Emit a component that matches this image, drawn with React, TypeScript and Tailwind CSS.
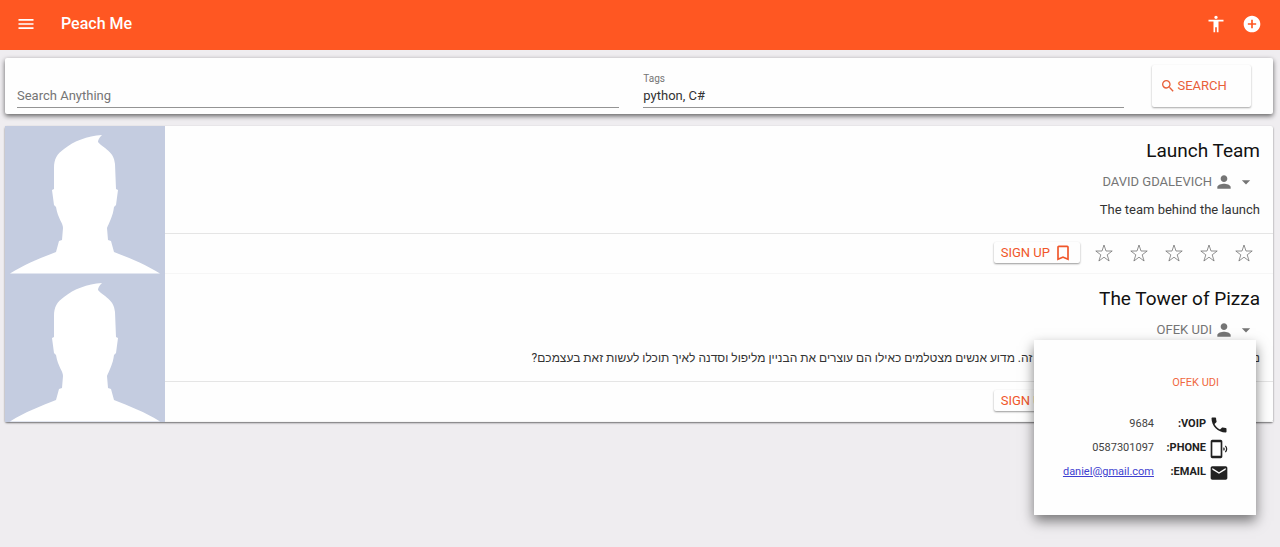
import { useState } from "react";
import {
  MdAccessibility,
  MdAddCircle,
  MdArrowDropDown,
  MdBookmarkBorder,
  MdEmail,
  MdMenu,
  MdPerson,
  MdPhone,
  MdPhonelinkRing,
  MdSearch,
} from "react-icons/md";

type Contact = { voip: string; phone: string; email: string };

type Project = {
  id: number;
  title: string;
  author: string;
  description: string;
  lang: string;
  contact: Contact;
};

const contact: Contact = { voip: "9684", phone: "0587301097", email: "daniel@gmail.com" };

const projects: Project[] = [
  {
    id: 1,
    title: "Launch Team",
    author: "David Gdalevich",
    description: "The team behind the launch",
    lang: "en",
    contact,
  },
  {
    id: 2,
    title: "The Tower of Pizza",
    author: "Ofek Udi",
    description:
      "נדבר על המגדל הנטוי ועל כל מה שמסתתר בו זה. מדוע אנשים מצטלמים כאילו הם עוצרים את הבניין מליפול וסדנה לאיך תוכלו לעשות זאת בעצמכם?",
    lang: "he",
    contact,
  },
];

function Avatar() {
  return (
    <svg viewBox="0 0 160 148" className="block h-[148px] w-40 shrink-0 bg-[#c4cce0]" aria-hidden="true">
      <path
        fill="#fff"
        d="M5 147.500 C20 138 36 132 51 126 L54 115 L57 114 L58 102 C58 97 53 93 51 81 L49 79 L47 64 L49 63 V42 C49 33 52 28 59 23 C69 15 82 10 97 9 C94 12 93 14 93 16 C99 23 109 25 110 38 L111 63 L113 64 L111 79 L109 81 C108 90 104 97 102 102 L103 114 L106 115 L109 126 C124 132 140 138 155 147.500 Z"
      />
    </svg>
  );
}

function Star() {
  return (
    <svg viewBox="0 0 18 18" className="size-[18px]" fill="none" stroke="#757575" strokeWidth="0.8">
      <path d="M9 1 L11 7 H17.200 L12.200 10.800 L14.100 17 L9 13.200 L3.900 17 L5.800 10.800 L0.800 7 H7 Z" />
    </svg>
  );
}

// The label floats above the line once the field has text
function Field({ id, label, initial = "" }: { id: string; label: string; initial?: string }) {
  const [value, setValue] = useState(initial);

  return (
    <div className="relative flex flex-col justify-end px-3 pb-1.5">
      <label
        htmlFor={id}
        className={
          value
            ? "text-[10px] leading-[10px] text-[#757575]"
            : "absolute bottom-1.5 text-[13px] leading-6 text-[#757575]"
        }
      >
        {label}
      </label>
      <input
        id={id}
        value={value}
        onChange={(e) => setValue(e.target.value)}
        className="h-6 w-full border-b border-[#949494] text-[13px] text-[#333] outline-none"
      />
    </div>
  );
}

function ContactCard({ project }: { project: Project }) {
  const rows = [
    { label: "VOIP", icon: MdPhone, value: project.contact.voip },
    { label: "PHONE", icon: MdPhonelinkRing, value: project.contact.phone },
    { label: "EMAIL", icon: MdEmail, value: project.contact.email, href: `mailto:${project.contact.email}` },
  ];

  return (
    <div
      dir="rtl"
      className="absolute right-0 top-full z-10 w-[222px] bg-[#fefefe] px-[27px] pb-[31px] pt-[35px] text-[11px] text-[#424242] shadow-[0_6px_12px_rgba(0,0,0,0.5)]"
    >
      <p className="mb-[21px] px-2.5 leading-4 text-[#f0693f]">{project.author.toUpperCase()}</p>
      {rows.map(({ label, icon: Icon, value, href }) => (
        <div key={label} className="flex h-6 items-center">
          <Icon className="ml-[3px] mt-0.5 size-5 shrink-0 text-[#212121]" />
          <span className="w-[52px] shrink-0 font-bold text-[#212121]">{label}:</span>
          {href ? (
            <a href={href} className="text-[#3f3fd0] underline">
              {value}
            </a>
          ) : (
            <span>{value}</span>
          )}
        </div>
      ))}
    </div>
  );
}

function ProjectRow({
  project,
  open,
  onToggle,
}: {
  project: Project;
  open: boolean;
  onToggle: () => void;
}) {
  return (
    <article className="flex">
      <Avatar />
      <div className="flex min-w-0 flex-1 flex-col">
        <div className="flex flex-col items-end px-[13px] py-[11px]">
          <h2 className="text-[19px] leading-7 text-[#111]">{project.title}</h2>
          <div className="relative mr-1 mt-[7px]">
            <button
              onClick={onToggle}
              aria-expanded={open}
              className="flex h-5 items-center text-[13px] uppercase text-[#757575]"
            >
              {project.author}
              <MdPerson className="ml-0.5 size-5" />
              <MdArrowDropDown className="ml-0.5 size-5" />
            </button>
            {open && <ContactCard project={project} />}
          </div>
          <p
            dir="auto"
            lang={project.lang}
            className="mt-1.5 text-[13px] leading-6 text-[#333] [&:lang(he)]:text-[12px]"
          >
            {project.description}
          </p>
        </div>
        <div className="flex flex-1 items-center justify-end border-y border-t-[#e5e5e5] border-b-[#f6f6f6] pb-0.5 pr-3">
          <button className="mr-1.5 flex h-[21px] items-center rounded-xs px-[7px] text-[13px] text-[#f0562a] shadow-[0_1px_2px_rgba(0,0,0,0.4)]">
            SIGN UP
            <MdBookmarkBorder className="ml-[3px] size-5" />
          </button>
          {[1, 2, 3, 4, 5].map((n) => (
            <button key={n} aria-label={`Rate ${n}`} className="flex w-[35px] justify-center">
              <Star />
            </button>
          ))}
        </div>
      </div>
    </article>
  );
}

export default function App() {
  const [openId, setOpenId] = useState<number | null>(2);

  return (
    <div className="min-h-screen bg-[#efedf0] font-[Roboto,'Liberation_Sans',sans-serif]">
      <header className="flex h-[50px] items-center bg-[#ff5722] px-4 pb-0.5 text-white">
        <button aria-label="Menu">
          <MdMenu className="size-5" />
        </button>
        <h1 className="ml-[25px] text-base font-medium">Peach Me</h1>
        <div className="ml-auto mr-0.5 flex gap-4">
          <button aria-label="Accessibility">
            <MdAccessibility className="size-5" />
          </button>
          <button aria-label="Add project">
            <MdAddCircle className="size-5" />
          </button>
        </div>
      </header>

      <main className="pl-[5px] pr-[7px] pt-2">
        <form
          onSubmit={(e) => e.preventDefault()}
          className="mb-3 grid h-14 grid-cols-[41fr_33fr_9fr] rounded-xs bg-[#fefefe] shadow-[0_2px_5px_rgba(0,0,0,0.6)]"
        >
          <Field id="search" label="Search Anything" />
          <Field id="tags" label="Tags" initial="python, C#" />
          <div className="flex items-center pl-4 pr-[22px]">
            <button className="flex h-[42px] w-full items-center gap-0.5 rounded-xs px-2 text-[13px] text-[#e8603a] shadow-[0_1px_2px_rgba(0,0,0,0.35)]">
              <MdSearch className="size-4" />
              SEARCH
            </button>
          </div>
        </form>

        <section className="rounded-xs bg-[#fefefe] shadow-[0_1px_2px_rgba(0,0,0,0.55)]">
          {projects.map((p) => (
            <ProjectRow
              key={p.id}
              project={p}
              open={openId === p.id}
              onToggle={() => setOpenId(openId === p.id ? null : p.id)}
            />
          ))}
        </section>
      </main>
    </div>
  );
}
